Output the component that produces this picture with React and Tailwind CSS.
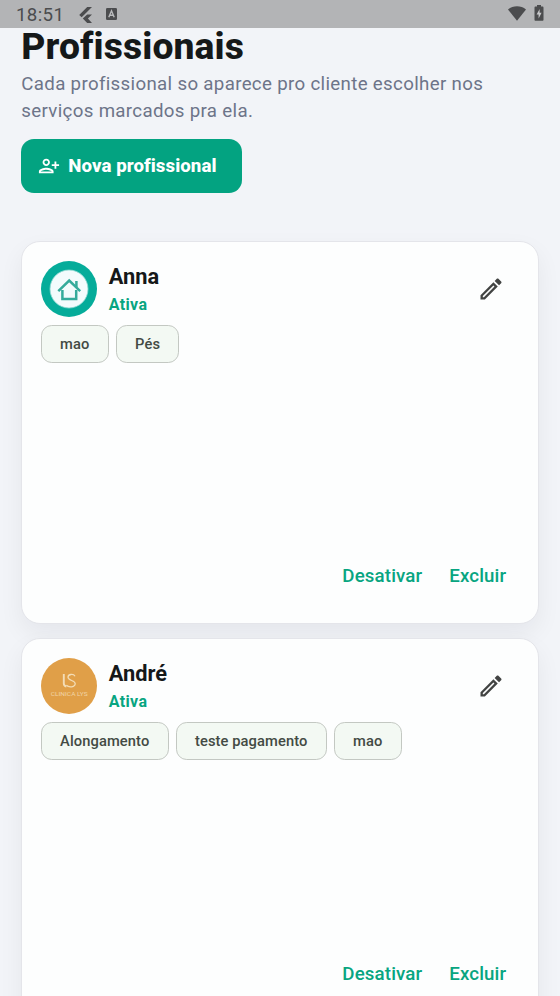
import { MdOutlineEdit, MdOutlinePersonAddAlt1 } from 'react-icons/md'

const professionals = [
  { name: 'Anna', status: 'Ativa', services: ['mao', 'Pés'], Avatar: HouseAvatar },
  { name: 'André', status: 'Ativa', services: ['Alongamento', 'teste pagamento', 'mao'], Avatar: ClinicAvatar },
]

function HouseAvatar() {
  return (
    <svg className="w-14 h-14 shrink-0" viewBox="0 0 56 56" fill="none">
      <circle cx="28" cy="28" r="28" fill="#05ac9a" />
      <circle cx="28" cy="28" r="19" fill="#f3fbfc" stroke="#8fd9d2" strokeWidth="0.8" />
      <g stroke="#35ab9b" strokeWidth="2.5">
        <path d="M17.3 30.2L28.2 19.5l11 10.7" />
        <path d="M21.4 29v9h13.8v-9" />
        <path d="M35.4 20v6" />
      </g>
    </svg>
  )
}

function ClinicAvatar() {
  return (
    <svg className="w-14 h-14 shrink-0" viewBox="0 0 56 56" fill="none">
      <circle cx="28" cy="28" r="28" fill="#e09f48" />
      <path d="M22.8 16v9.5c0 1.8.9 2.6 2.6 3" stroke="#f3dcb5" strokeWidth="1.9" />
      <path d="M34 18.2c-1.4-2.5-7-2.4-7 1.1 0 3.4 7.2 3 7.2 6.3 0 3.8-6.4 4.1-8.8 1.7" stroke="#f3dcb5" strokeWidth="1.3" />
      <text x="28.2" y="37.7" textAnchor="middle" textLength="37" lengthAdjust="spacingAndGlyphs" className="font-['Roboto',sans-serif] text-[6px]" fill="#f1d4a5">
        CLINICA LYS
      </text>
    </svg>
  )
}

function StatusBar() {
  return (
    <div className="relative z-10 flex h-7 shrink-0 items-center bg-[#b3b4b6] pl-4 pr-4 text-[#4b4c4e]">
      <span className="mt-px w-[50px] text-[18.7px] leading-[22px] tracking-[0.35px]">18:51</span>
      <svg className="ml-[13px] mt-0.5 h-4 w-[14px]" viewBox="0 0 14 16" fill="currentColor">
        <path d="M8.2 0H13L2.7 10.3.2 7.9zM8.2 7.4H13l-4.1 4.1L13 16H8.2l-4.4-4.5z" />
      </svg>
      <svg className="ml-[13px] h-3 w-[11px]" viewBox="0 0 11 12">
        <rect width="11" height="12" rx="1.3" fill="currentColor" />
        <path d="M2.8 9.3L5.5 2.8l2.7 6.5M3.8 7.3h3.4" fill="none" stroke="#b9babc" strokeWidth="1.4" />
      </svg>
      <svg className="ml-auto mb-0.5 h-[15px] w-[18px]" viewBox="0 0 18 15" fill="currentColor">
        <path d="M0 3.4C5-.9 13-.9 18 3.4L9 14.7z" />
      </svg>
      <svg className="ml-2 mb-0.5 h-4 w-[10px]" viewBox="0 0 10 16">
        <path d="M3 0h4v1.6h1.4c.7 0 1.1.4 1.1 1.1v12c0 .7-.4 1.1-1.1 1.1H1.6c-.7 0-1.1-.4-1.1-1.1v-12c0-.7.4-1.1 1.1-1.1H3z" fill="currentColor" />
        <path d="M5.6 4L2.6 9.4h2v4l3-5.6h-2z" fill="#c6c7c9" />
      </svg>
    </div>
  )
}

function ProfessionalCard({ name, status, services, Avatar }) {
  return (
    <article className="flex h-[383px] shrink-0 flex-col rounded-[19px] border border-[#e4e5ea] bg-[#fdfefe] px-[18.5px] pt-[19px] shadow-[0_10px_24px_rgba(20,25,40,0.06)]">
      <div className="flex h-14 items-center">
        <Avatar />
        <div className="ml-3 flex-1 pt-[3px]">
          <h2 className="text-[21.8px] font-bold leading-7 text-[#151819]">{name}</h2>
          <p className="text-[16px] font-bold leading-[27px] tracking-[0.35px] text-[#08a581]">{status}</p>
        </div>
        <button aria-label="Editar" className="mr-[14.5px]">
          <MdOutlineEdit className="h-7 w-7 text-[#424443]" />
        </button>
      </div>
      <div className="mt-2 flex gap-[7px]">
        {services.map((service) => (
          <span
            key={service}
            className="flex h-[38px] items-center rounded-[10.7px] border-[1.5px] border-[#c3c8c2] bg-[#f3f9f3] px-[18.3px] text-[14.7px] font-medium tracking-[0.1px] text-[#434b44]"
          >
            {service}
          </span>
        ))}
      </div>
      <div className="mb-[32.5px] mr-[13px] mt-auto flex justify-end gap-[27px] text-[18.7px] font-medium leading-7 tracking-[0.13px] text-[#08a581]">
        <button>Desativar</button>
        <button>Excluir</button>
      </div>
    </article>
  )
}

export default function App() {
  return (
    <div className="flex h-screen flex-col overflow-hidden bg-[#f2f4f8] font-['Roboto',sans-serif]">
      <StatusBar />
      <main className="flex min-h-0 flex-1 flex-col px-[21.3px]">
        <h1 className="-mt-[4.5px] text-[37.3px] font-extrabold leading-[44px] tracking-[0.1px] text-[#151819]">Profissionais</h1>
        <p className="mt-[3.5px] text-[18.7px] leading-[26.7px] tracking-[0.33px] text-[#6d7489]">
          Cada profissional so aparece pro cliente escolher nos serviços marcados pra ela.
        </p>
        <button className="mt-[14.6px] flex h-[54px] w-[221px] shrink-0 items-center gap-2 rounded-[13px] bg-[#03a381] pl-[17px] text-[18.7px] font-extrabold tracking-[0.05px] text-white">
          <MdOutlinePersonAddAlt1 className="h-[22px] w-[22px]" />
          Nova profissional
        </button>
        <div className="mt-[47.6px] flex flex-col gap-[14.7px]">
          {professionals.map((professional) => (
            <ProfessionalCard key={professional.name} {...professional} />
          ))}
        </div>
      </main>
    </div>
  )
}
